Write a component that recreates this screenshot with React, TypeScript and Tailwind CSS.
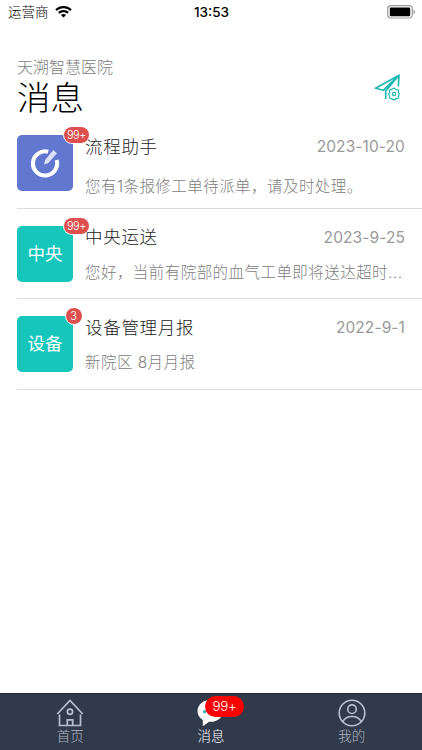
import React from "react";

type Message = {
    title: string;
    text: string;
    date: string;
    badge: string;
    avatar?: string;
}

const messages: Message[] = [
    { title: "流程助手", text: "您有1条报修工单待派单，请及时处理。", date: "2023-10-20", badge: "99+" },
    { title: "中央运送", text: "您好，当前有院部的血气工单即将送达超时...", date: "2023-9-25", badge: "99+", avatar: "中央" },
    { title: "设备管理月报", text: "新院区 8月月报", date: "2022-9-1", badge: "3", avatar: "设备" },
];

function WifiIcon() {
    return (
        <svg viewBox="0 0 17 12" className="w-[17px] h-3" fill="#000">
            <path d="M8.5 0C5.3 0 2.4 1.2.3 3.3l1.6 1.7C3.6 3.3 5.9 2.3 8.5 2.3s4.9 1 6.6 2.7l1.6-1.7C14.6 1.2 11.7 0 8.5 0Z" />
            <path d="M8.5 4C6.4 4 4.5 4.8 3.1 6.1l1.6 1.7c1-.9 2.3-1.5 3.8-1.5s2.8.6 3.8 1.5l1.6-1.7C12.5 4.8 10.6 4 8.5 4Z" />
            <path d="M8.5 7.900c-1 0-1.900.4-2.500 1l2.500 2.600L11 8.900c-.6-.6-1.500-1-2.500-1Z" />
        </svg>
    )
}

function BatteryIcon() {
    return (
        <svg viewBox="0 0 28 14" className="w-7 h-3.5">
            <rect x=".7" y=".7" width="24.600" height="12.300" rx="3.500" fill="none" stroke="#9b9b9b" strokeWidth="1.200" />
            <rect x="2.800" y="2.500" width="20.400" height="8.700" rx="1.200" fill="#000" />
            <path d="M26.500 4.800c1 .3 1.500 1.100 1.500 2.100s-.5 1.800-1.500 2.100Z" fill="#9b9b9b" />
        </svg>
    )
}

function SendSettingsIcon() {
    return (
        <svg viewBox="0 0 28 28" className="w-7 h-7" fill="none" stroke="#1fb9b4" strokeWidth="1.700" strokeLinejoin="round">
            <path d="M24.300 13.500L25 2.200L1.500 15.300l7.800 2L25 2.200L11.700 18V26" />
            <path
                strokeWidth="1.200"
                d="M17.600 16.600Q20 13.800 22.200 16.600Q25.600 16.400 24.200 19.200Q26.300 21 24.200 22.900Q25.600 25.800 22.200 25.500Q20 28.200 17.600 25.500Q14.300 25.800 15.700 22.900Q13.600 21 15.700 19.200Q14.300 16.400 17.600 16.600Z"
            />
            <circle cx="20" cy="21" r="1.600" strokeWidth="1.200" />
        </svg>
    )
}

function ProcessIcon() {
    return (
        <svg viewBox="0 0 30 30" className="w-[30px] h-[30px]" fill="none">
            <path d="M18.200 3.800A12.100 12.100 0 1 0 26.600 12" stroke="#fff" strokeWidth="4" />
            <path d="M14.100 16.500l1-4.400L23.300 2l3.700 3.200-8.900 10.100Z" fill="#dbe0fb" />
        </svg>
    )
}

function HomeIcon() {
    return (
        <svg viewBox="0 0 28 28" className="w-7 h-7" fill="none" stroke="#b9c0d2" strokeWidth="1.700">
            <path d="M1.300 15L14 1.500L26.700 15" />
            <path d="M3.500 15.500V26.500H24.500V15.500M11.300 26V20.800H16.700V26" />
            <circle cx="14" cy="12.800" r="2.600" />
        </svg>
    )
}

function ChatIcon() {
    return (
        <svg viewBox="0 0 28 28" className="w-7 h-7">
            <path d="M13.500 1C6 1 .5 5.800.5 12c0 3.900 2 7 5.300 9v6.200l6.300-4.400c8 .6 14-4.300 14-10.800C26.100 5.800 20.600 1 13.500 1Z" fill="#fff" />
            <circle cx="7.600" cy="12.700" r="1.600" fill="#24b5bd" />
            <circle cx="18" cy="12.700" r="1.600" fill="#24b5bd" />
        </svg>
    )
}

function UserIcon() {
    return (
        <svg viewBox="0 0 28 28" className="w-7 h-7" fill="none" stroke="#b9c0d2" strokeWidth="1.600">
            <circle cx="14" cy="14" r="12.800" />
            <circle cx="14" cy="10.200" r="4.300" />
            <path d="M4.800 22.500c2-3.500 5.200-5 9.200-5s7.200 1.500 9.200 5" />
        </svg>
    )
}

function MessageRow({ title, text, date, badge, avatar }: Message) {
    return (
        <li className="ml-[17px] h-[90.5px] flex gap-3 border-b border-[#dadada] pt-[17px] pr-[17px]">
            <div className={`relative size-14 shrink-0 rounded-[5px] flex items-center justify-center text-white text-[17.5px] ${avatar ? "bg-[#17c6bb]" : "bg-[#6277cf]"}`}>
                {avatar ? <span className="mt-px font-normal">{avatar}</span> : <ProcessIcon />}
                <span className={`absolute -top-2 h-4 rounded-full bg-[#dc4f4d] ring-1 ring-white text-[11px] leading-4 text-center ${badge.length > 1 ? "left-[47px] w-[25px] tracking-[-0.4px]" : "left-[48.500px] w-4"}`}>
                    {badge}
                </span>
            </div>
            <div className="min-w-0 grow">
                <div className="flex justify-between items-center h-6">
                    <h2 className="text-[17.5px] tracking-[0.7px] text-[#222] whitespace-nowrap">{title}</h2>
                    <time className="font-normal text-[15.500px] tracking-[0.1px] text-[#999]">{date}</time>
                </div>
                <p className={`${avatar ? "mt-[11px]" : "mt-4"} h-6 leading-6 text-[15.500px] tracking-[0.45px] text-[#808080] whitespace-nowrap`}>{text}</p>
            </div>
        </li>
    )
}

export default function App() {
    return (
        <div className="w-[422px] h-[750px] flex flex-col bg-white overflow-hidden font-light font-[Inter,'Noto_Sans_CJK_SC',sans-serif]">
            <div className="h-6 pl-2 pr-[7px] grid grid-cols-3 items-center text-black">
                <div className="flex items-center gap-1.5 text-[13.500px]">
                    <span>运营商</span>
                    <WifiIcon />
                </div>
                <span className="text-center text-[13.500px] font-medium">13:53</span>
                <div className="flex justify-end"><BatteryIcon /></div>
            </div>
            <header className="h-[94px] pl-[17px] pr-5 flex justify-between">
                <div>
                    <p className="mt-[31px] h-6 leading-6 text-base text-[#808080]">天溯智慧医院</p>
                    <h1 className="-mt-px h-10 leading-10 text-[33.500px] text-black">消息</h1>
                </div>
                <div className="mt-[49px]"><SendSettingsIcon /></div>
            </header>
            <ul className="grow">
                {messages.map((m) => <MessageRow key={m.title} {...m} />)}
            </ul>
            <nav className="h-[57px] grid grid-cols-3 bg-[#303a4b] border-t border-[#222a38] text-[13.500px] text-[#b0b5c0]">
                <div className="flex flex-col items-center pt-[5px]">
                    <HomeIcon />
                    <span className="leading-[18px]">首页</span>
                </div>
                <div className="flex flex-col items-center pt-[5px] text-white">
                    <div className="relative">
                        <ChatIcon />
                        <span className="absolute -top-[3px] left-2 w-[39px] h-[21px] rounded-full bg-[#fe0000] text-center text-[13.500px] tracking-[-0.3px] leading-[21px]">99+</span>
                    </div>
                    <span className="leading-[18px]">消息</span>
                </div>
                <div className="flex flex-col items-center pt-[5px]">
                    <UserIcon />
                    <span className="leading-[18px]">我的</span>
                </div>
            </nav>
        </div>
    )
}
